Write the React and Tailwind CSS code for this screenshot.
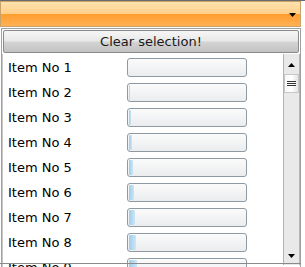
import React from "react";

const items = [0, 1, 2, 3, 4, 5, 6, 7, 8];

function Tri({ down = true }) {
  return (
    <svg width="7" height="4" viewBox="0 0 7 4" className="block">
      {down ? <polygon points="0,0 7,0 3.5,4" fill="#000" /> : <polygon points="0,4 7,4 3.5,0" fill="#000" />}
    </svg>
  );
}

export default function App() {
  return (
    <div className="relative w-[305px] h-[267px] overflow-hidden bg-white text-black" style={{ fontFamily: '"DejaVu Sans", Verdana, sans-serif' }}>
      <div className="h-px w-full bg-[#6b6b6b]" />
      {/* combo */}
      <div className="relative w-[301px] h-[26px] border border-[#c9a36a] bg-[linear-gradient(to_bottom,#ffe1ac_0%,#ffd08c_48%,#ff9d2e_50%,#ffb255_100%)]">
        <div className="absolute right-[4px] top-[11px]">
          <Tri />
        </div>
      </div>
      {/* popup panel */}
      <div className="mt-px ml-px w-[300px] h-[260px] border border-[#a0a0a0] bg-white flex flex-col">
        <div className="mx-px mt-px h-[23px] shrink-0 border border-[#8a8a8a] rounded-[2px] flex items-center justify-center text-[13px] text-[#1a1a1a] bg-[linear-gradient(to_bottom,#f6f6f6_0%,#e8e8e8_48%,#d4d4d4_52%,#c2c2c2_100%)]">
          Clear selection!
        </div>
        <div className="flex flex-1 mt-px min-h-0">
          <div className="flex-1 pt-[1px] border-l border-[#c8c8c8] overflow-visible">
            {items.map((i) => (
              <div key={i} className="h-[25px] flex items-center">
                <span className="w-[124px] pl-[5px] text-[13px] shrink-0">Item No {i + 1}</span>
                <div className="relative w-[120px] h-[19px] rounded-[3px] border border-[#8d9aa4] bg-[linear-gradient(to_bottom,#fbfbfb,#eaecee)] overflow-hidden">
                  {i > 0 && (
                    <div
                      className="absolute left-px top-px bottom-px rounded-[1px] bg-[linear-gradient(to_right,#9fcde9,#cbe6f5)]"
                      style={{ width: `${i * 0.95}px` }}
                    />
                  )}
                </div>
              </div>
            ))}
          </div>
          {/* scrollbar */}
          <div className="w-[17px] h-[211px] shrink-0 border-l border-r border-[#b4b4b4] bg-[#e9e9e9] flex flex-col items-center">
            <div className="h-[20px] w-full flex items-center justify-center pt-[2px]">
              <Tri down={false} />
            </div>
            <div className="h-[19px] w-full border border-[#c8c8c8] bg-[linear-gradient(to_right,#f8f8f8,#ffffff_50%,#e4e4e4)] flex flex-col items-center justify-center gap-[1px]">
              <div className="h-px w-[9px] bg-[#333]" />
              <div className="h-px w-[9px] bg-[#333]" />
              <div className="h-px w-[9px] bg-[#333]" />
            </div>
            <div className="flex-1" />
            <div className="h-[18px] w-full flex items-center justify-center">
              <Tri />
            </div>
          </div>
        </div>
      </div>
      <div className="absolute left-0 top-[263px] w-[301px] h-px bg-[#8a8a8a]" />
    </div>
  );
}
